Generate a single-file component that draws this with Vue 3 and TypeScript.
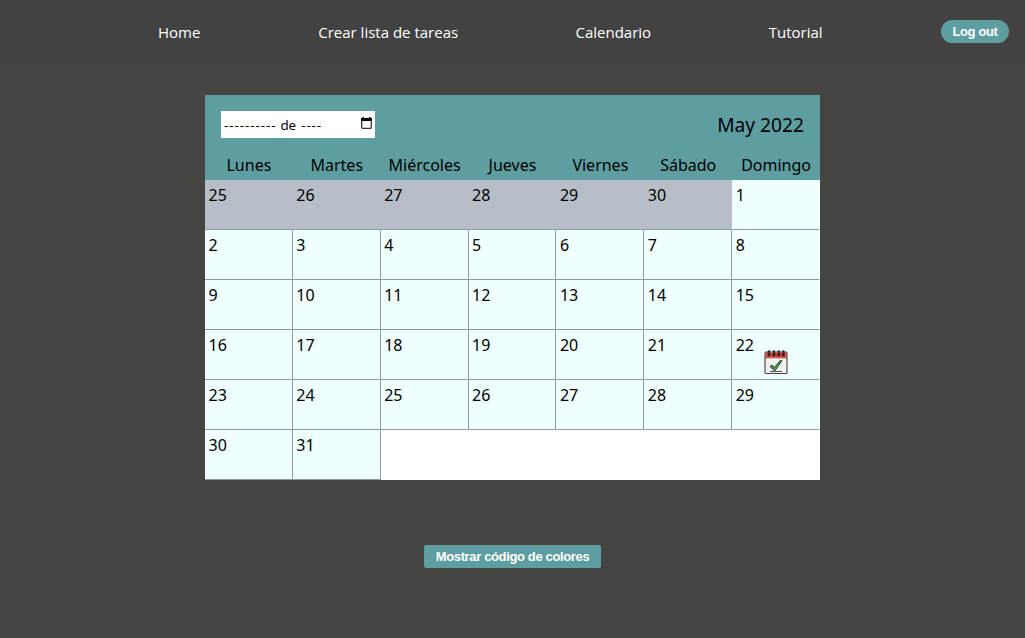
<script setup lang="ts">
interface Day {
  label: number
  outside: boolean
  task: boolean
}

const links = [
  { text: 'Home', cls: 'home' },
  { text: 'Crear lista de tareas', cls: 'create' },
  { text: 'Calendario', cls: 'calendar-link' },
  { text: 'Tutorial', cls: 'tutorial' },
]
const weekdays = ['Lunes', 'Martes', 'Miércoles', 'Jueves', 'Viernes', 'Sábado', 'Domingo']
const days: Day[] = [
  ...[25, 26, 27, 28, 29, 30].map((label) => ({ label, outside: true, task: false })),
  ...Array.from({ length: 31 }, (_, i) => ({ label: i + 1, outside: false, task: i + 1 === 22 })),
]
</script>

<template>
  <div class="page">
    <nav class="nav">
      <a v-for="l in links" :key="l.text" :class="['link', l.cls]">{{ l.text }}</a>
      <button class="logout">Log out</button>
    </nav>
    <main class="main">
      <section class="calendar">
        <header class="head">
          <div class="month-input">
            <span class="dashes">----------</span>
            <span class="de">de</span>
            <span class="dashes">----</span>
            <svg class="picker" width="11" height="12" viewBox="0 0 11 12">
              <path d="M1.500 0h1.500v1h5V0h1.500v1H11v3H0V1h1.500z" fill="#000" />
              <path d="M.7 3v7.500q0 .8.8.8h8q.8 0 .8-.8V3" fill="none" stroke="#333" stroke-width="1.300" />
            </svg>
          </div>
          <div class="title">May 2022</div>
        </header>
        <div class="weekdays">
          <span v-for="w in weekdays" :key="w">{{ w }}</span>
        </div>
        <div class="grid">
          <div v-for="(d, i) in days" :key="i" :class="['day', { outside: d.outside, last: i % 7 === 6 }]">
            <span>{{ d.label }}</span>
            <svg v-if="d.task" class="task" width="24" height="26" viewBox="0 0 24 26">
              <rect x="1" y="3" width="22" height="21.500" rx="1" fill="#f2f0f0" stroke="#404343" stroke-width="1.100" />
              <path d="M1.500 3.500h21v5h-21z" fill="#d63b2f" />
              <path d="M1 8.800h22" stroke="#9c3a34" stroke-width=".8" />
              <g fill="none" stroke="#222" stroke-width="2.400" stroke-linecap="round">
                <path d="M5 2.500v3.500M10 2.500v3.500M14.700 2.500v3.500M19.300 2.500v3.500" />
              </g>
              <g fill="none" stroke="#8a4a45" stroke-width=".8">
                <path d="M5 2.500v2M10 2.500v2M14.700 2.500v2M19.300 2.500v2" />
              </g>
              <path d="M6 17.500l2-1.500 2.300 2.600 6-7.200 1.700.3-7.300 10.400z" fill="#39a047" stroke="#24352a" stroke-width=".9" />
              <path d="M6 22.500h12" stroke="#555" stroke-width="1" />
            </svg>
          </div>
        </div>
      </section>
      <button class="codes">Mostrar código de colores</button>
    </main>
  </div>
</template>

<style>
body {
  margin: 0;
  background: #444442;
}
</style>

<style scoped>
.page {
  height: 638px;
  overflow: hidden;
  background: #444442;
  font-family: 'Noto Sans', 'Open Sans', sans-serif;
  font-size: 16px;
  color: #000;
}
.nav {
  box-sizing: border-box;
  height: 64px;
  padding: 0 16px 0 158px;
  display: flex;
  justify-content: space-between;
  align-items: center;
  background: #424242;
}
.link {
  color: #fff;
  white-space: nowrap;
  font: 400 15px/22px 'Open Sans', sans-serif;
}
.home { width: 43px; }
.create { width: 140px; }
.calendar-link { width: 76px; }
.tutorial { width: 55px; }
button {
  box-sizing: border-box;
  height: 23px;
  padding: 0;
  border: 0;
  background: #5f9ea0;
  color: #fff;
  font: bold 13px/23px 'Liberation Sans', Arial, sans-serif;
  letter-spacing: -0.36px;
  white-space: nowrap;
}
.logout {
  width: 68px;
  border-radius: 12px;
  margin-bottom: 1px;
}
.main {
  display: flex;
  flex-direction: column;
  align-items: center;
  padding-top: 31px;
}
.calendar {
  width: 615px;
  height: 385px;
  background: #fff;
}
.head {
  box-sizing: border-box;
  height: 55px;
  padding: 16px 16px 0;
  display: flex;
  justify-content: space-between;
  background: #5f9ea0;
}
.month-input {
  box-sizing: border-box;
  width: 154px;
  height: 27px;
  padding: 1px 3px 0;
  display: flex;
  align-items: center;
  gap: 5px;
  background: #fff;
  font-size: 13.333px;
  line-height: 26px;
}
.dashes {
  letter-spacing: 0.95px;
}
.de {
  margin-left: -1px;
}
.picker {
  margin-left: auto;
  margin-bottom: 4px;
}
.title {
  font-size: 19.2px;
  line-height: 28px;
}
.weekdays,
.grid {
  display: grid;
  grid-template-columns: repeat(7, 1fr);
}
.weekdays {
  height: 30px;
  line-height: 30px;
  text-align: center;
  background: #5f9ea0;
}
.grid {
  grid-auto-rows: 50px;
}
.day {
  box-sizing: border-box;
  position: relative;
  padding: 4px 3.5px;
  line-height: 22px;
  background: #f0ffff;
  border-right: 1px solid #8e9aa6;
  border-bottom: 1px solid #8e9aa6;
}
.day.last {
  border-right-color: #f0ffff;
}
.day.outside {
  background: #b7bec7;
  border-right-color: #b7bec7;
}
.task {
  position: absolute;
  left: 32px;
  top: 19px;
}
.codes {
  width: 177px;
  margin-top: 65px;
  border-radius: 2px;
}
</style>
